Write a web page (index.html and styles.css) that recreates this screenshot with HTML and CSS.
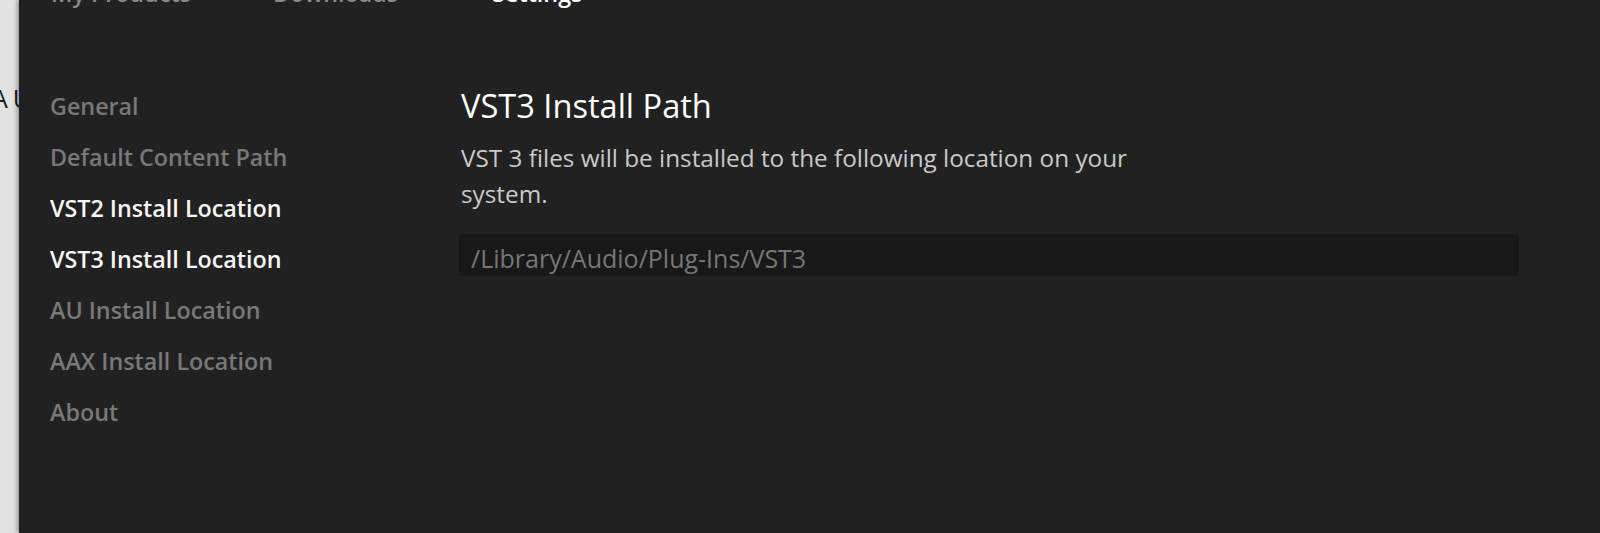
FILE: index.html
```html
<!DOCTYPE html>
<html>
<head>
<meta charset="utf-8">
<link rel="stylesheet" href="styles.css">
</head>
<body>
<div class="backdrop-text">AU</div>
<div class="panel">
  <nav class="tabs">
    <span class="tab">My Products</span>
    <span class="tab">Downloads</span>
    <span class="tab tab-active">Settings</span>
  </nav>
  <div class="main">
    <ul class="sidebar">
      <li class="side-item">General</li>
      <li class="side-item">Default Content Path</li>
      <li class="side-item side-active">VST2 Install Location</li>
      <li class="side-item side-active">VST3 Install Location</li>
      <li class="side-item">AU Install Location</li>
      <li class="side-item">AAX Install Location</li>
      <li class="side-item">About</li>
    </ul>
    <section class="content">
      <h1 class="title">VST3 Install Path</h1>
      <p class="desc">VST 3 files will be installed to the following location on your system.</p>
      <div class="path-field">/Library/Audio/Plug-Ins/VST3</div>
    </section>
  </div>
</div>
</body>
</html>
```
FILE: styles.css
```css
* { box-sizing: border-box; }
html, body {
  margin: 0;
  padding: 0;
  height: 533px;
  overflow: hidden;
}
body {
  background: #e2e2e2;
  font-family: "Open Sans", Lato, sans-serif;
  position: relative;
}
.backdrop-text {
  position: absolute;
  left: -8px;
  top: 83px;
  font-size: 25px;
  line-height: 30px;
  color: #1a1a1a;
  letter-spacing: 5px;
}
.panel {
  position: relative;
  margin-left: 19px;
  height: 533px;
  background: #212121;
  box-shadow: -2px 0 4px rgba(0,0,0,0.35);
  overflow: hidden;
}
.tabs {
  display: flex;
  margin-top: -21px;
  padding-left: 32px;
  font-size: 23.3px;
  line-height: 28px;
  font-weight: 600;
  color: #8a8a8a;
}
.tab { margin-right: 82px; }
.tab:nth-child(2) { margin-right: 94px; }
.tab-active { color: #ffffff; }
.main {
  display: flex;
  padding-top: 74px;
}
.sidebar {
  list-style: none;
  margin: 0;
  padding: 0 0 0 31px;
  width: 440px;
  flex: none;
}
.side-item {
  font-size: 23.3px;
  line-height: 51px;
  height: 51px;
  font-weight: 600;
  color: #787878;
  white-space: nowrap;
}
.side-active { color: #f7f7f7; }
.content {
  flex: 1;
  padding-right: 81px;
}
.title {
  margin: 5px 0 0 2px;
  font-size: 32.6px;
  line-height: 40px;
  font-weight: 400;
  color: #ffffff;
}
.desc {
  margin: 14px 0 0 2px;
  max-width: 700px;
  font-size: 24.3px;
  line-height: 36px;
  color: #c9c9c9;
}
.path-field {
  margin-top: 22px;
  height: 42px;
  padding-top: 7px;
  line-height: 35px;
  padding-left: 12px;
  background: #181818;
  border-radius: 4px;
  font-size: 25px;
  color: #767676;
}
```
